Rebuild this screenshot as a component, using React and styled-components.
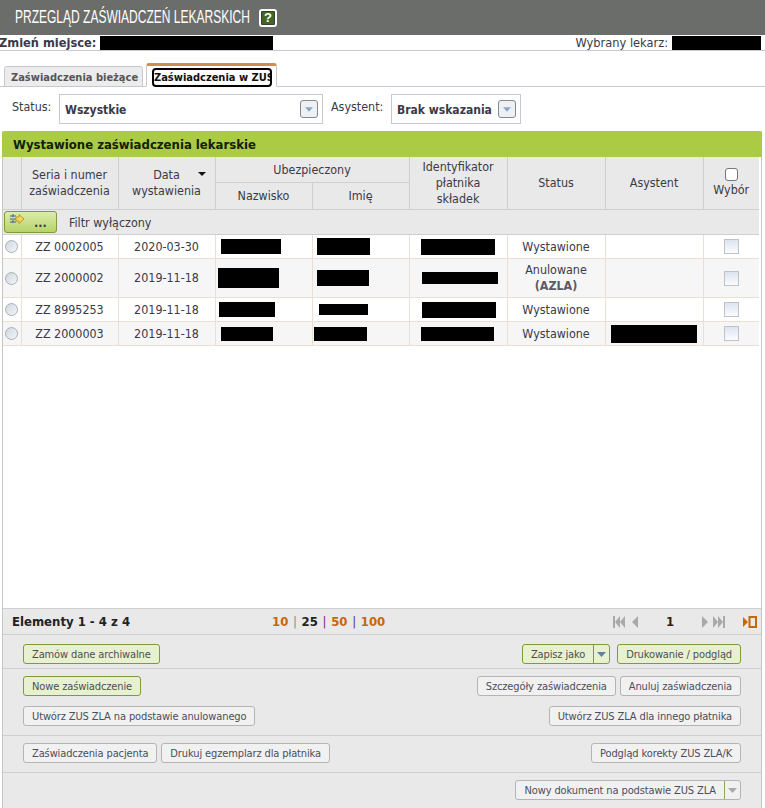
import React from "react";
import styled, { createGlobalStyle } from "styled-components";

const GlobalStyle = createGlobalStyle`
	html, body {
		margin: 0;
		padding: 0;
		height: 100%;
		background: #fff;
	}
	#root {
		height: 100%;
	}
	* {
		box-sizing: border-box;
	}
`;

const FONT = `"DejaVu Sans Condensed", "DejaVu Sans", sans-serif`;

const Page = styled.div`
	height: 808px;
	overflow: hidden;
	display: flex;
	flex-direction: column;
	font-family: ${FONT};
	font-size: 12px;
	color: #3a3a48;
`;

const Header = styled.div`
	height: 35px;
	flex: none;
	background: #6b6d6b;
	display: flex;
	align-items: center;
	gap: 9px;
	padding-left: 15px;
`;

const Title = styled.h1`
	margin: 0;
	width: 235px;
	white-space: nowrap;
	font-family: "Liberation Sans", sans-serif;
	font-weight: 400;
	font-size: 18px;
	color: #fff;
	transform: scaleX(0.667);
	transform-origin: left center;
`;

const Help = styled.span`
	flex: none;
	width: 18px;
	height: 18px;
	background: #42671f;
	border: 2px solid #fff;
	box-shadow: 0 0 0 1px #3c3c3c inset;
	border-radius: 3px;
	color: #fff;
	font-family: "Liberation Sans", sans-serif;
	font-weight: 700;
	font-size: 13px;
	line-height: 14px;
	text-align: center;
`;

const InfoBar = styled.div`
	height: 16px;
	flex: none;
	display: flex;
	justify-content: space-between;
	align-items: center;
	border-bottom: 1px solid #c5c9d0;
	margin-left: -1px;
	padding-right: 4px;
	font-size: 12.7px;
`;

const InfoGroup = styled.div`
	display: flex;
	align-items: center;
	gap: 4px;
`;

const InfoLabel = styled.span`
	font-weight: ${(p) => (p.$bold ? 700 : 400)};
`;

const Redacted = styled.span`
	display: block;
	background: #000;
	width: ${(p) => p.$w}px;
	height: ${(p) => p.$h}px;
	margin-left: ${(p) => p.$x || 0}px;
`;

const TabBar = styled.div`
	height: 36px;
	flex: none;
	display: flex;
	align-items: flex-end;
	gap: 3px;
	padding-left: 4px;
	border-bottom: 1px solid #c5c9d0;
`;

const Tab = styled.div`
	height: ${(p) => (p.$active ? 24 : 21)}px;
	padding: ${(p) => (p.$active ? "2px 4px 0 5px" : "4px 6px 0")};
	width: ${(p) => (p.$active ? 131 : 139)}px;
	background: ${(p) => (p.$active ? "#fff" : "#ececec")};
	border: 1px solid #c5c9d0;
	border-top: ${(p) => (p.$active ? "3px solid #cf8e4b" : "1px solid #c5c9d0")};
	border-bottom: ${(p) => (p.$active ? "1px solid #fff" : "1px solid #c5c9d0")};
	border-radius: 3px 3px 0 0;
	margin-bottom: -1px;
	font-weight: 700;
	font-size: 11px;
	white-space: nowrap;
	color: #555;
`;

const TabFocus = styled.div`
	height: 19px;
	width: 120px;
	overflow: hidden;
	border: 2px solid #000;
	border-radius: 4px;
	color: #111;
	line-height: 15px;
`;

const FilterBar = styled.div`
	height: 44px;
	flex: none;
	display: flex;
	align-items: flex-start;
	padding: 7px 0 0 12px;
	font-size: 12.4px;
`;

const FilterLabel = styled.span`
	margin-top: 5px;
	width: ${(p) => p.$w}px;
	line-height: 16px;
`;

const Select = styled.div`
	width: ${(p) => p.$w}px;
	height: 30px;
	margin-right: 8px;
	border: 1px solid #c5c9d0;
	display: flex;
	align-items: center;
	justify-content: space-between;
	padding: 0 4px 0 5px;
	font-weight: 700;
	font-size: 12px;
`;

const SelectValue = styled.span`
	margin-top: 2px;
`;

const SelectButton = styled.span`
	width: 18px;
	height: 18px;
	border: 1px solid #85888f;
	border-radius: 3px;
	background: #eef0f3;
	display: flex;
	align-items: center;
	justify-content: center;
`;

const Panel = styled.section`
	flex: 1;
	min-height: 0;
	margin: 0 3px 0 2px;
	border-left: 1px solid #c5c5c5;
	border-right: 1px solid #c5c5c5;
	display: flex;
	flex-direction: column;
`;

const PanelTitle = styled.h2`
	margin: 0 -1px;
	height: 26px;
	flex: none;
	background: #abcb45;
	border-radius: 3px 3px 0 0;
	color: #11200a;
	font-size: 13px;
	font-weight: 700;
	line-height: 27px;
	padding-left: 11px;
`;

const TableArea = styled.div`
	flex: 1;
	min-height: 0;
	font-size: 12.4px;
`;

const Table = styled.table`
	width: 756px;
	table-layout: fixed;
	border-collapse: collapse;
`;

const Th = styled.th`
	background: #e9e9e9;
	border: 1px solid #cfcfcf;
	border-top: none;
	font-weight: 400;
	padding: 1px 0 0;
	line-height: 16px;
	text-align: center;
	vertical-align: middle;
	height: ${(p) => p.$h || "auto"};
	&:first-child {
		border-left: none;
	}
	&:last-child {
		border-right: none;
	}
`;

const SortHead = styled.div`
	position: relative;
`;

const SortMark = styled.span`
	position: absolute;
	top: 5px;
	right: 9px;
	width: 0;
	height: 0;
	border-left: 4px solid transparent;
	border-right: 4px solid transparent;
	border-top: 4px solid #111;
`;

const FilterRow = styled.td`
	background: #e9e9e9;
	height: 25px;
	padding: 0 0 0 1px;
	border-bottom: 1px solid #cfcfcf;
`;

const FilterContent = styled.div`
	display: flex;
	align-items: center;
	gap: 12px;
`;

const FilterText = styled.span`
	margin-top: 2px;
`;

const FilterButton = styled.span`
	width: 53px;
	height: 22px;
	border: 1px solid #7e9a3a;
	border-radius: 3px;
	background: linear-gradient(#dcecae, #b7d369);
	display: flex;
	padding: 2px 0 0 5px;
	gap: 9px;
	font-weight: 700;
	line-height: 18px;
`;

const Row = styled.tr`
	background: ${(p) => (p.$alt ? "#f6f6f6" : "#fff")};
	height: ${(p) => p.$h}px;
`;

const Td = styled.td`
	border: 1px solid #ecdfd2;
	border-top: none;
	padding: 1px 0 0;
	text-align: center;
	line-height: 16px;
	&:first-child {
		border-left: none;
	}
	&:last-child {
		border-right: none;
	}
`;

const Radio = styled.span`
	display: block;
	width: 13px;
	height: 13px;
	margin-left: 2px;
	border-radius: 50%;
	border: 1px solid #aab0b8;
	background: linear-gradient(135deg, #cfd6e0, #f4f6f8);
`;

const Check = styled.span`
	display: block;
	margin: 0 auto;
	width: 15px;
	height: 15px;
	border: 1px solid #bfc3c9;
	background: linear-gradient(#dbe4f0, #fbfcfd);
`;

const HeadCheck = styled.span`
	display: block;
	margin: 0 auto 1px;
	width: 13px;
	height: 13px;
	border: 1px solid #767676;
	border-radius: 3px;
	background: #fff;
`;

const Code = styled.b`
	color: #5a5a68;
`;

const Pager = styled.div`
	height: 27px;
	flex: none;
	background: #e9e9e9;
	border-top: 1px solid #cfcfcf;
	border-bottom: 1px solid #cfcfcf;
	display: flex;
	align-items: center;
	padding-left: 9px;
	font-size: 13px;
	font-weight: 700;
	color: #222;
`;

const PagerCount = styled.span`
	width: 260px;
`;

const PageSizes = styled.div`
	display: flex;
	gap: 4.7px;
	width: 341px;
`;

const PageSize = styled.span`
	color: ${(p) => (p.$current ? "#222" : "#c8660a")};
`;

const Sep = styled.span`
	font-weight: 400;
	color: ${(p) => p.$c || "#888"};
`;

const PagerNav = styled.div`
	display: flex;
	align-items: center;
`;

const PageNumber = styled.span`
	width: 62px;
	text-align: center;
	color: #3a1a10;
`;

const Actions = styled.div`
	background: #e9e9e9;
	flex: none;
	display: flex;
	flex-direction: column;
`;

const ActionGroup = styled.div`
	display: flex;
	flex-direction: column;
	gap: 10px;
	padding: ${(p) => p.$top || 7}px 20px 0;
	border-bottom: ${(p) => (p.$last ? "none" : "1px solid #cfcfcf")};
	height: ${(p) => p.$h}px;
`;

const ActionRow = styled.div`
	display: flex;
	justify-content: space-between;
`;

const ButtonGroup = styled.div`
	display: flex;
	gap: ${(p) => p.$gap || 4}px;
`;

const Button = styled.button`
	height: 20px;
	padding: 0 8px;
	margin: 0;
	font-family: ${FONT};
	font-size: 11px;
	letter-spacing: -0.12px;
	line-height: 17px;
	color: #4d4d5c;
	border-radius: 3px;
	border: 1px solid ${(p) => (p.$primary ? "#7f9b35" : "#b4b4b4")};
	background: ${(p) => (p.$primary ? "#e7f1cf" : "#f1f1f1")};
	display: flex;
	align-items: center;
	white-space: nowrap;
`;

const SplitArrow = styled.span`
	margin-left: 8px;
	margin-right: -8px;
	height: 18px;
	width: 16px;
	border-left: 1px solid ${(p) => (p.$primary ? "#7f9b35" : "#93a94e")};
	display: flex;
	align-items: center;
	justify-content: center;
`;

const Caret = ({ color = "#8fa6cf", w = 9 }) => (
	<svg width={w} height="5" viewBox="0 0 9 5">
		<path d="M0 0h9L4.5 5z" fill={color} />
	</svg>
);

const FilterIcon = () => (
	<svg width="15" height="11" viewBox="0 0 15 11">
		<path d="M0 2h6M0 5h6M0 8h6" stroke="#44618c" strokeWidth="1" />
		<path d="M3 0v3M3 6v3" stroke="#44618c" strokeWidth="1" />
		<path d="M6 3h3V.5L14 5 9 9.5V7H6z" fill="#f5d75a" stroke="#b08a1e" strokeWidth="0.8" />
	</svg>
);

const NavIcon = ({ d, color = "#a9a9a9", w = 26 }) => (
	<svg width={w} height="12" viewBox={`0 0 ${w} 12`}>
		<path d={d} fill={color} />
	</svg>
);

const OrangeIcon = styled.svg`
	margin-left: 16px;
`;

const rows = [
	{ no: "ZZ 0002005", date: "2020-03-30", h: 24, r: [[60, 15, 5], [53, 17, 4], [74, 16, 11]], status: "Wystawione" },
	{ no: "ZZ 2000002", date: "2019-11-18", h: 39, alt: true, r: [[61, 20, 2], [52, 16, 4], [76, 12, 12]], status: "Anulowane", code: "(AZLA)" },
	{ no: "ZZ 8995253", date: "2019-11-18", h: 24, r: [[56, 15, 3], [49, 11, 6], [74, 16, 12]], status: "Wystawione" },
	{ no: "ZZ 2000003", date: "2019-11-18", h: 24, alt: true, r: [[52, 14, 5], [53, 14, 1], [73, 14, 11]], status: "Wystawione", asystent: [86, 18, 5] },
];

export default function App() {
	return (
		<Page>
			<GlobalStyle />
			<Header>
				<Title>PRZEGLĄD ZAŚWIADCZEŃ LEKARSKICH</Title>
				<Help>?</Help>
			</Header>
			<InfoBar>
				<InfoGroup>
					<InfoLabel $bold>Zmień miejsce:</InfoLabel>
					<Redacted $w={173} $h={14} />
				</InfoGroup>
				<InfoGroup>
					<InfoLabel>Wybrany lekarz:</InfoLabel>
					<Redacted $w={89} $h={14} />
				</InfoGroup>
			</InfoBar>
			<TabBar>
				<Tab>Zaświadczenia bieżące</Tab>
				<Tab $active>
					<TabFocus>Zaświadczenia w ZUS</TabFocus>
				</Tab>
			</TabBar>
			<FilterBar>
				<FilterLabel $w={47}>Status:</FilterLabel>
				<Select $w={264}>
					<SelectValue>Wszystkie</SelectValue>
					<SelectButton>
						<Caret w={8} />
					</SelectButton>
				</Select>
				<FilterLabel $w={60}>Asystent:</FilterLabel>
				<Select $w={130}>
					<SelectValue>Brak wskazania</SelectValue>
					<SelectButton>
						<Caret w={8} />
					</SelectButton>
				</Select>
			</FilterBar>
			<Panel>
				<PanelTitle>Wystawione zaświadczenia lekarskie</PanelTitle>
				<TableArea>
					<Table>
						<colgroup>
							<col width="18" />
							<col width="97" />
							<col width="97" />
							<col width="97" />
							<col width="97" />
							<col width="98" />
							<col width="98" />
							<col width="98" />
							<col width="56" />
						</colgroup>
						<thead>
							<tr>
								<Th rowSpan={2} />
								<Th rowSpan={2}>
									Seria i numer
									<br />
									zaświadczenia
								</Th>
								<Th rowSpan={2}>
									<SortHead>
										Data
										<SortMark />
										<br />
										wystawienia
									</SortHead>
								</Th>
								<Th colSpan={2} $h="25px">
									Ubezpieczony
								</Th>
								<Th rowSpan={2}>
									Identyfikator
									<br />
									płatnika
									<br />
									składek
								</Th>
								<Th rowSpan={2}>Status</Th>
								<Th rowSpan={2}>Asystent</Th>
								<Th rowSpan={2}>
									<HeadCheck />
									Wybór
								</Th>
							</tr>
							<tr>
								<Th $h="27px">Nazwisko</Th>
								<Th>Imię</Th>
							</tr>
						</thead>
						<tbody>
							<tr>
								<FilterRow colSpan={9}>
									<FilterContent>
										<FilterButton>
											<FilterIcon />
											...
										</FilterButton>
										<FilterText>Filtr wyłączony</FilterText>
									</FilterContent>
								</FilterRow>
							</tr>
							{rows.map((row) => (
								<Row key={row.no} $h={row.h} $alt={row.alt}>
									<Td>
										<Radio />
									</Td>
									<Td>{row.no}</Td>
									<Td>{row.date}</Td>
									{row.r.map(([w, h, x], i) => (
										<Td key={i}>
											<Redacted $w={w} $h={h} $x={x} />
										</Td>
									))}
									<Td>
										{row.status}
										{row.code && (
											<>
												<br />
												<Code>{row.code}</Code>
											</>
										)}
									</Td>
									<Td>{row.asystent && <Redacted $w={row.asystent[0]} $h={row.asystent[1]} $x={row.asystent[2]} />}</Td>
									<Td>
										<Check />
									</Td>
								</Row>
							))}
						</tbody>
					</Table>
				</TableArea>
				<Pager>
					<PagerCount>Elementy 1 - 4 z 4</PagerCount>
					<PageSizes>
						<PageSize>10</PageSize>
						<Sep>|</Sep>
						<PageSize $current>25</PageSize>
						<Sep $c="#7a2a7a">|</Sep>
						<PageSize>50</PageSize>
						<Sep $c="#446">|</Sep>
						<PageSize>100</PageSize>
					</PageSizes>
					<PagerNav>
						<NavIcon d="M0 0h2v12H0zM2 6l5-6v12zM7 6l5-6v12zM19 6l6-6v12z" />
						<PageNumber>1</PageNumber>
						<NavIcon d="M1 0l6 6-6 6zM12 0l5 6-5 6zM17 0l5 6-5 6zM22 0h2v12h-2z" />
						<OrangeIcon width="14" height="12" viewBox="0 0 14 12">
							<path d="M0 1l5 5-5 5z" fill="#c8660a" />
							<rect x="6.5" y="1" width="6.5" height="10" fill="none" stroke="#c8660a" strokeWidth="2" />
						</OrangeIcon>
					</PagerNav>
				</Pager>
				<Actions>
					<ActionGroup $h={34} $top={9}>
						<ActionRow>
							<Button $primary>Zamów dane archiwalne</Button>
							<ButtonGroup $gap={7}>
								<Button $primary>
									Zapisz jako
									<SplitArrow $primary>
										<Caret color="#5f7f9f" />
									</SplitArrow>
								</Button>
								<Button $primary>Drukowanie / podgląd</Button>
							</ButtonGroup>
						</ActionRow>
					</ActionGroup>
					<ActionGroup $h={67}>
						<ActionRow>
							<Button $primary>Nowe zaświadczenie</Button>
							<ButtonGroup>
								<Button>Szczegóły zaświadczenia</Button>
								<Button>Anuluj zaświadczenia</Button>
							</ButtonGroup>
						</ActionRow>
						<ActionRow>
							<Button>Utwórz ZUS ZLA na podstawie anulowanego</Button>
							<Button>Utwórz ZUS ZLA dla innego płatnika</Button>
						</ActionRow>
					</ActionGroup>
					<ActionGroup $h={37}>
						<ActionRow>
							<ButtonGroup>
								<Button>Zaświadczenia pacjenta</Button>
								<Button>Drukuj egzemplarz dla płatnika</Button>
							</ButtonGroup>
							<Button>Podgląd korekty ZUS ZLA/K</Button>
						</ActionRow>
					</ActionGroup>
					<ActionGroup $h={35} $last>
						<ActionRow>
							<span />
							<Button>
								Nowy dokument na podstawie ZUS ZLA
								<SplitArrow>
									<Caret color="#aaa" />
								</SplitArrow>
							</Button>
						</ActionRow>
					</ActionGroup>
				</Actions>
			</Panel>
		</Page>
	);
}
